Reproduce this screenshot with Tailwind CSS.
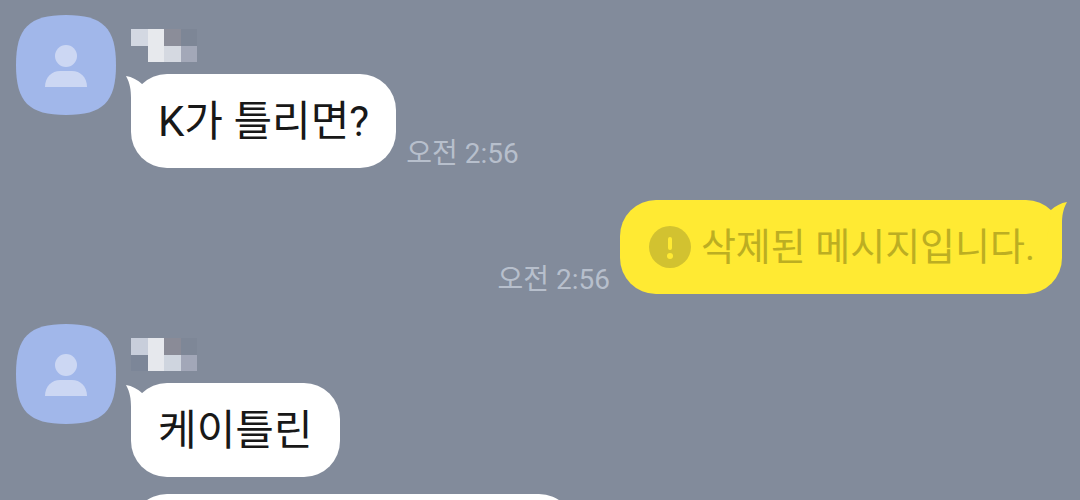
<!DOCTYPE html>
<html lang="ko">

<head>
    <meta charset="UTF-8">
    <meta name="viewport" content="width=device-width, initial-scale=1.0">
    <title>Chat</title>
    <script src="https://cdn.jsdelivr.net/npm/@tailwindcss/browser@4"></script>
</head>

<body class="h-screen overflow-hidden bg-[#828b9b] font-[Roboto,'Noto_Sans_CJK_KR',sans-serif]">
    <!-- shapes used more than once -->
    <svg class="hidden">
        <symbol id="avatar" viewBox="0 0 100 100">
            <path fill="#a1b7ea" d="M50 0C87 0 100 13 100 50S87 100 50 100 0 87 0 50 13 0 50 0Z" />
            <circle cx="50" cy="41" r="11" fill="#ccd7f3" />
            <path fill="#ccd7f3" d="M29 72C29 62 36 56 44 56H56C64 56 71 62 71 72Z" />
        </symbol>
        <symbol id="tail" viewBox="0 0 20 40">
            <path fill="currentColor" d="M0 2C6 3 12 6 16 10L20 40H5V24C5 16 4 9 0 2Z" />
        </symbol>
    </svg>

    <main class="flex flex-col pl-4 pr-[18px] pt-[15px]">
        <div class="flex gap-[15px]">
            <svg class="size-[100px] shrink-0" role="img" aria-label="profile"><use href="#avatar" /></svg>
            <div class="flex flex-col items-start pt-3.5">
                <svg class="h-[33px] w-[66px]" viewBox="0 0 4 2" preserveAspectRatio="none" shape-rendering="crispEdges">
                    <path fill="#d3d8e2" d="M0 0h1v1H0z" />
                    <path fill="#e7e9ed" d="M1 0h1v2H1z" />
                    <path fill="#8b8d99" d="M2 0h1v1H2z" />
                    <path fill="#7d8696" d="M3 0h1v1H3z" />
                    <path fill="#d5d9e1" d="M2 1h1v1H2z" />
                    <path fill="#a3a8b8" d="M3 1h1v1H3z" />
                </svg>
                <div class="mt-3 flex items-end gap-2.5">
                    <div class="relative rounded-[36px] bg-white px-[27px] pt-[18px] pb-4 text-white">
                        <svg class="absolute -left-[5px] top-0 h-10 w-5"><use href="#tail" /></svg>
                        <p class="whitespace-nowrap text-[42px] leading-[60px] text-[#181818]">K가 틀리면?</p>
                    </div>
                    <time class="whitespace-nowrap text-[28px] leading-7 text-[#b7bfcc]">오전 2:56</time>
                </div>
            </div>
        </div>

        <div class="mt-8 flex items-end justify-end gap-2.5">
            <time class="whitespace-nowrap text-[28px] leading-7 text-[#b7bfcc]">오전 2:56</time>
            <div class="relative flex items-center gap-2.5 rounded-[36px] bg-[#ffea33] pl-[29px] pr-[27px] py-[17px] text-[#ffea33]">
                <svg class="absolute -right-[5px] top-0 h-10 w-5 -scale-x-100"><use href="#tail" /></svg>
                <svg class="size-[42px] shrink-0" viewBox="0 0 42 42">
                    <circle cx="21" cy="21" r="21" fill="#d2c230" />
                    <path stroke="#ffea33" stroke-width="4" stroke-linecap="round" d="M21 13v9" />
                    <circle cx="21" cy="30" r="3" fill="#ffea33" />
                </svg>
                <p class="whitespace-nowrap text-[38px] leading-[60px] text-[#bcae22]">삭제된 메시지입니다.</p>
            </div>
        </div>

        <div class="mt-[30px] flex gap-[15px]">
            <svg class="size-[100px] shrink-0" role="img" aria-label="profile"><use href="#avatar" /></svg>
            <div class="flex flex-col items-start pt-3.5">
                <svg class="h-[33px] w-[66px]" viewBox="0 0 4 2" preserveAspectRatio="none" shape-rendering="crispEdges">
                    <path fill="#c8cedb" d="M0 0h1v1H0z" />
                    <path fill="#7c8698" d="M0 1h1v1H0z" />
                    <path fill="#e6e8ed" d="M1 0h1v2H1z" />
                    <path fill="#8a8b97" d="M2 0h1v1H2z" />
                    <path fill="#7e8797" d="M3 0h1v1H3z" />
                    <path fill="#cfd5df" d="M2 1h1v1H2z" />
                    <path fill="#a2a7b8" d="M3 1h1v1H3z" />
                </svg>
                <div class="relative mt-3 rounded-[36px] bg-white px-[27px] pt-[18px] pb-4 text-white">
                    <svg class="absolute -left-[5px] top-0 h-10 w-5"><use href="#tail" /></svg>
                    <p class="whitespace-nowrap text-[42px] leading-[60px] text-[#181818]">케이틀린</p>
                </div>
                <!-- next message, still below the fold -->
                <div class="mt-[17px] h-24 w-[444px] rounded-[36px] bg-white"></div>
            </div>
        </div>
    </main>
</body>

</html>
